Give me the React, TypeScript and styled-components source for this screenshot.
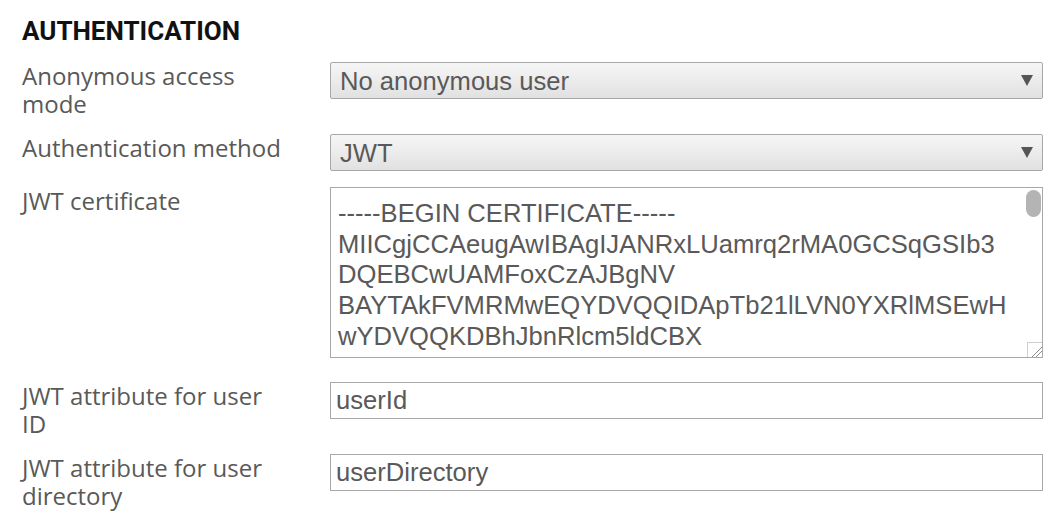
import React from "react";
import styled, { createGlobalStyle } from "styled-components";

const GlobalStyle = createGlobalStyle`
  html, body {
    margin: 0;
    padding: 0;
    background: #ffffff;
  }
  * { box-sizing: border-box; }
`;

const Page = styled.div`
  padding: 16px 21px 0 22px;
  font-family: "Open Sans", "Noto Sans", sans-serif;
`;

const Heading = styled.h2`
  margin: 0 0 16px 0;
  font-family: Roboto, "Noto Sans", sans-serif;
  font-weight: 700;
  font-size: 26px;
  line-height: 30px;
  color: #111111;
`;

const Row = styled.div`
  display: grid;
  grid-template-columns: 266px 1fr;
  column-gap: 42px;
  margin-bottom: 16px;
`;

const Label = styled.label`
  font-family: "Open Sans", "Noto Sans", sans-serif;
  font-size: 24px;
  line-height: 28px;
  color: #595959;
`;

const SelectWrap = styled.div`
  position: relative;
  height: 37px;
`;

const Select = styled.select`
  appearance: none;
  -webkit-appearance: none;
  display: block;
  width: 100%;
  height: 37px;
  margin: 0;
  padding: 0 30px 0 9px;
  border: 1px solid #a8a8a8;
  border-radius: 2px;
  background: linear-gradient(#f6f6f6, #e1e1e1);
  font-family: "Liberation Sans", Arial, sans-serif;
  font-size: 25.6px;
  color: #595959;
  outline: none;
`;

const Arrow = styled.svg`
  position: absolute;
  right: 10px;
  top: 13px;
  width: 12px;
  height: 11px;
  pointer-events: none;
`;

const AreaWrap = styled.div`
  position: relative;
  margin-bottom: 8px;
`;

const TextArea = styled.textarea`
  display: block;
  width: 100%;
  height: 171px;
  margin: 0;
  padding: 10px 31px 4px 7px;
  border: 1px solid #a8a8a8;
  border-radius: 0;
  background: #ffffff;
  font-family: "Liberation Sans", Arial, sans-serif;
  font-size: 25.6px;
  line-height: 1.2;
  color: #595959;
  resize: vertical;
  outline: none;
  overflow-y: auto;

  &::-webkit-resizer {
    background:
      linear-gradient(135deg,
        transparent 0 62%, #8c8c8c 62% 67%, transparent 67% 77%, #8c8c8c 77% 82%, transparent 82%),
      #ffffff;
    border-top: 1px solid #cfcfcf;
    border-left: 1px solid #cfcfcf;
  }
`;

const ScrollThumb = styled.div`
  position: absolute;
  top: 3px;
  right: 2px;
  width: 15px;
  height: 27px;
  border-radius: 8px;
  background: #b4b4b4;
  pointer-events: none;
`;

const Input = styled.input`
  display: block;
  width: 100%;
  height: 37px;
  margin: 0;
  padding: 0 5px;
  border: 1px solid #a8a8a8;
  border-radius: 0;
  background: #ffffff;
  font-family: "Liberation Sans", Arial, sans-serif;
  font-size: 25.6px;
  color: #595959;
  outline: none;
`;

const CERT = `-----BEGIN CERTIFICATE-----
MIICgjCCAeugAwIBAgIJANRxLUamrq2rMA0GCSqGSIb3DQEBCwUAMFoxCzAJBgNV
BAYTAkFVMRMwEQYDVQQIDApTb21lLVN0YXRlMSEwHwYDVQQKDBhJbnRlcm5ldCBX
aWRnaXRzIFB0eSBMdGQxEzARBgNVBAMMCmxvY2FsaG9zdDAeFw0xNzA1MTAxMjAw
MDBaFw0yNzA1MDgxMjAwMDBaMFoxCzAJBgNVBAYTAkFVMRMwEQYDVQQIDApTb21l
LVN0YXRlMSEwHwYDVQQKDBhJbnRlcm5ldCBXaWRnaXRzIFB0eSBMdGQxEzARBgNV
BAMMCmxvY2FsaG9zdDCBnzANBgkqhkiG9w0BAQEFAAOBjQAwgYkCgYEAwJ3sNhD0
m1Q2h8KcYwT0a5V4R2s3Yq7bP1xZt9N3uWfLr0e6GkM8pHc2dA4jVbS7yU1iQxO5
vL3nF8tZ2oR9eW6kC0yB1sH4gJ7qD5mN2aT8uX3fV9pK6rE0wY4cI1lO7jS5bG2h
A3zQ8nM1tL6vR4eX9dC2kW7yB0fH5gJ3sP1qU8oT6iN4aE2mZ9rV0cD7xK5lY3wIDAQAB
o1AwTjAdBgNVHQ4EFgQU3Fq7kL2mN8pR4sT6vX1zA9cE5gIwHwYDVR0jBBgwFoAU
3Fq7kL2mN8pR4sT6vX1zA9cE5gIwDAYDVR0TBAUwAwEB/zANBgkqhkiG9w0BAQsF
AAOBgQBx7Ke2Lq9Nw3Rt5Yv1Za8Bc4Dd6Ef0Gh2Ij9Kl3Mn5Op7Qr1St4Uv6Wx8Yz
0Ab2Cd4Ef6Gh8Ij0Kl2Mn4Op6Qr8St0Uv2Wx4Yz6Ab8Cd0Ef2Gh4Ij6Kl8Mn0Op2
Qr4St6Uv8Wx0Yz2Ab4Cd6Ef8Gh0Ij2Kl4Mn6Op8Qr0St2Uv4Wx6Yz8Ab0Cd2Ef4
-----END CERTIFICATE-----`;

const TriangleIcon = () => (
  <Arrow viewBox="0 0 12 11" aria-hidden="true">
    <polygon points="0,0 12,0 6,11" fill="#555555" />
  </Arrow>
);

export default function App() {
  return (
    <>
      <GlobalStyle />
      <Page>
        <Heading>AUTHENTICATION</Heading>

        <Row>
          <Label>Anonymous access mode</Label>
          <SelectWrap>
            <Select defaultValue="none">
              <option value="none">No anonymous user</option>
              <option value="always">Always anonymous user</option>
              <option value="allow">Allow anonymous user</option>
            </Select>
            <TriangleIcon />
          </SelectWrap>
        </Row>

        <Row>
          <Label>Authentication method</Label>
          <SelectWrap>
            <Select defaultValue="jwt">
              <option value="ticket">Ticket</option>
              <option value="header">Header authentication</option>
              <option value="saml">SAML</option>
              <option value="jwt">JWT</option>
            </Select>
            <TriangleIcon />
          </SelectWrap>
        </Row>

        <Row>
          <Label>JWT certificate</Label>
          <AreaWrap>
            <TextArea defaultValue={CERT} spellCheck={false} />
            <ScrollThumb />
          </AreaWrap>
        </Row>

        <Row>
          <Label>JWT attribute for user ID</Label>
          <Input defaultValue="userId" spellCheck={false} />
        </Row>

        <Row>
          <Label>JWT attribute for user directory</Label>
          <Input defaultValue="userDirectory" spellCheck={false} />
        </Row>
      </Page>
    </>
  );
}
